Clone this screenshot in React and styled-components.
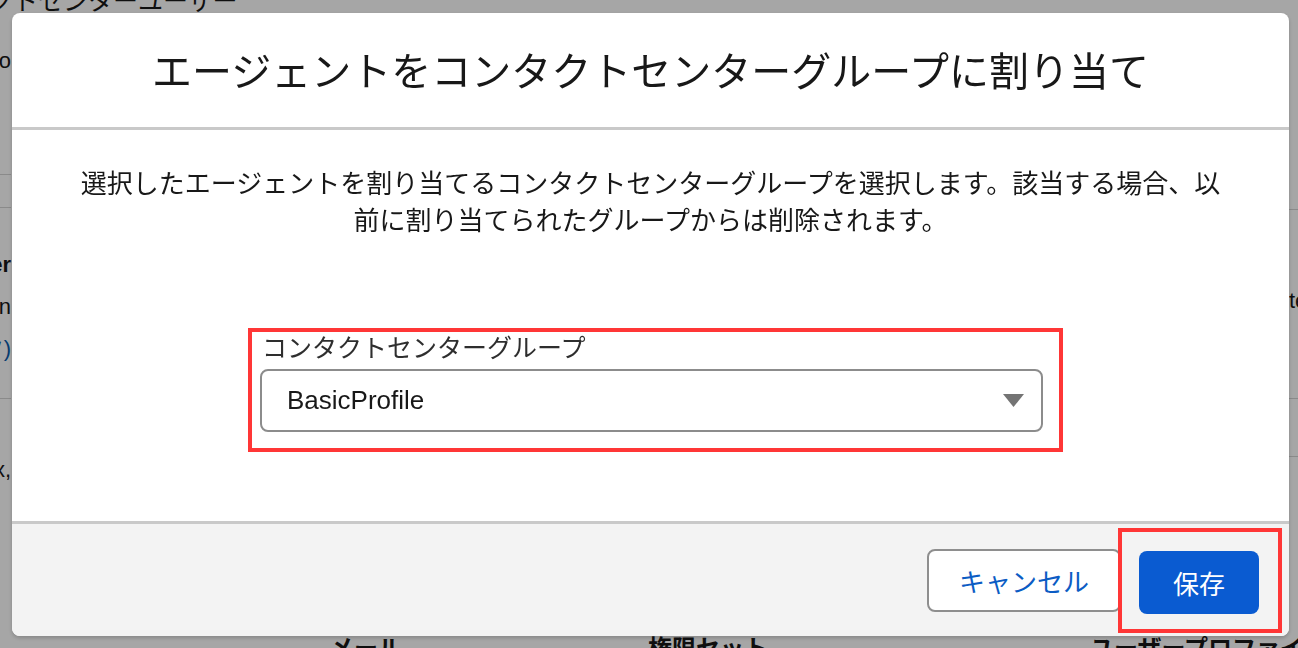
import React from "react";
import styled, { createGlobalStyle } from "styled-components";

const GlobalStyle = createGlobalStyle`
  html, body {
    margin: 0;
    padding: 0;
    width: 1298px;
    height: 648px;
    overflow: hidden;
    background: #fff;
  }
  body {
    font-family: "Liberation Sans", "Noto Sans CJK JP", sans-serif;
    color: #181818;
  }
  * { box-sizing: border-box; }
`;

// --- page behind the modal ---

const Page = styled.div`
  width: 1298px;
  height: 648px;
  overflow: hidden;
  display: flex;
  flex-direction: column;
`;

const PageTitle = styled.div`
  margin: -14px 0 0 -87px;
  font-size: 25px;
  line-height: 30px;
  white-space: nowrap;
`;

const PageMain = styled.div`
  flex: 1;
  min-height: 0;
  display: flex;
  justify-content: space-between;
  overflow: hidden;
`;

const SideCol = styled.div`
  width: 220px;
  margin-left: ${(p) => (p.$side === "left" ? "-209px" : "0")};
  margin-right: ${(p) => (p.$side === "right" ? "-211px" : "0")};
  display: flex;
  flex-direction: column;
  text-align: ${(p) => (p.$side === "left" ? "right" : "left")};
`;

const SideRow = styled.div`
  flex: none;
  height: ${(p) => p.$h}px;
  padding-top: ${(p) => p.$pad || 0}px;
  border-bottom: 1px solid #d4d4d4;
  font-size: 22px;
  line-height: 42px;
`;

const SideText = styled.div`
  font-weight: ${(p) => (p.$bold ? 700 : 400)};
  color: ${(p) => (p.$link ? "#0b5cab" : "#181818")};
`;

const TableHead = styled.div`
  flex: none;
  height: 44px;
  padding-top: 30px;
  display: grid;
  grid-template-columns: 330px 318px 442px 1fr;
  font-size: 24px;
  font-weight: 700;
  line-height: 30px;
  white-space: nowrap;
`;

// --- modal ---

const Overlay = styled.div`
  position: fixed;
  inset: 0;
  background: rgba(0, 0, 0, 0.35);
  display: flex;
  padding: 13px 9px 12px 12px;
`;

const Modal = styled.div`
  flex: 1;
  display: flex;
  flex-direction: column;
  background: #fff;
  border-radius: 8px;
  overflow: hidden;
  box-shadow: 0 2px 4px rgba(0, 0, 0, 0.2);
  font-family: "Liberation Sans", "Noto Sans CJK JP", sans-serif;
`;

const Header = styled.header`
  flex: none;
  height: 117px;
  display: flex;
  align-items: center;
  justify-content: center;
  padding-top: 3px;
  border-bottom: 3px solid #c9c9c9;
`;

const Title = styled.h2`
  margin: 0;
  font-size: 40px;
  font-weight: 400;
  line-height: 48px;
  color: #181818;
  white-space: nowrap;
`;

const Body = styled.div`
  flex: 1;
  display: flex;
  flex-direction: column;
  align-items: center;
  padding-top: 36px;
`;

const Description = styled.p`
  margin: 0;
  font-size: 26px;
  line-height: 37px;
  text-align: center;
  color: #181818;
  white-space: nowrap;
`;

const Highlight = styled.div`
  border: 4px solid #ff3636;
  padding: ${(p) => p.$pad};
  margin: ${(p) => p.$margin || 0};
`;

const Label = styled.div`
  margin-left: 2px;
  font-size: 25px;
  line-height: 32px;
  color: #2e2e2e;
`;

const Select = styled.div`
  margin-top: 5px;
  width: 783px;
  height: 63px;
  border: 2px solid #8c8c8c;
  border-radius: 8px;
  padding: 0 17px 0 25px;
  display: flex;
  align-items: center;
  justify-content: space-between;
  font-size: 26px;
  color: #181818;
`;

const Footer = styled.footer`
  flex: none;
  height: 115px;
  background: #f3f3f3;
  border-top: 3px solid #c9c9c9;
  display: flex;
  align-items: center;
  justify-content: flex-end;
  padding-right: 7px;
`;

const Button = styled.button`
  height: 63px;
  width: ${(p) => p.$w}px;
  border-radius: 8px;
  font-family: "Liberation Sans", "Noto Sans CJK JP", sans-serif;
  font-size: 26px;
  cursor: pointer;
  border: ${(p) => (p.$brand ? "none" : "2px solid #8e8e8e")};
  background: ${(p) => (p.$brand ? "#0a5bd1" : "#fff")};
  color: ${(p) => (p.$brand ? "#fff" : "#0b5cc4")};
`;

const Caret = () => (
  <svg width="21" height="13" viewBox="0 0 21 13">
    <path d="M0 0 H21 L10.5 13 Z" fill="#747474" />
  </svg>
);

export default function App() {
  return (
    <>
      <GlobalStyle />
      <Page>
        <PageTitle>コンタクトセンターユーザー</PageTitle>
        <PageMain>
          <SideCol $side="left">
            <SideRow $h={159} $pad={24}>
              <SideText>Info</SideText>
            </SideRow>
            <SideRow $h={33} />
            <SideRow $h={191} $pad={36}>
              <SideText $bold>Manager</SideText>
              <SideText>Person</SideText>
              <SideText $link>(リンク)</SideText>
            </SideRow>
            <SideRow $h={213} $pad={50}>
              <SideText>x,</SideText>
            </SideRow>
          </SideCol>
          <SideCol $side="right">
            <SideRow $h={194} />
            <SideRow $h={189} $pad={70}>
              <SideText>te</SideText>
            </SideRow>
            <SideRow $h={58} />
          </SideCol>
        </PageMain>
        <TableHead>
          <span />
          <span>メール</span>
          <span>権限セット</span>
          <span>ユーザープロファイル</span>
        </TableHead>
      </Page>

      <Overlay>
        <Modal>
          <Header>
            <Title>エージェントをコンタクトセンターグループに割り当て</Title>
          </Header>
          <Body>
            <Description>
              選択したエージェントを割り当てるコンタクトセンターグループを選択します。該当する場合、以
              <br />
              前に割り当てられたグループからは削除されます。
            </Description>
            <Highlight $pad="0 16px 16px 8px" $margin="88px 0 0 10px">
              <Label>コンタクトセンターグループ</Label>
              <Select>
                <span>BasicProfile</span>
                <Caret />
              </Select>
            </Highlight>
          </Body>
          <Footer>
            <Button $w={194}>キャンセル</Button>
            <Highlight $pad="19px 19px 15px 17px" $margin="0 0 0 -3px">
              <Button $brand $w={120}>保存</Button>
            </Highlight>
          </Footer>
        </Modal>
      </Overlay>
    </>
  );
}
